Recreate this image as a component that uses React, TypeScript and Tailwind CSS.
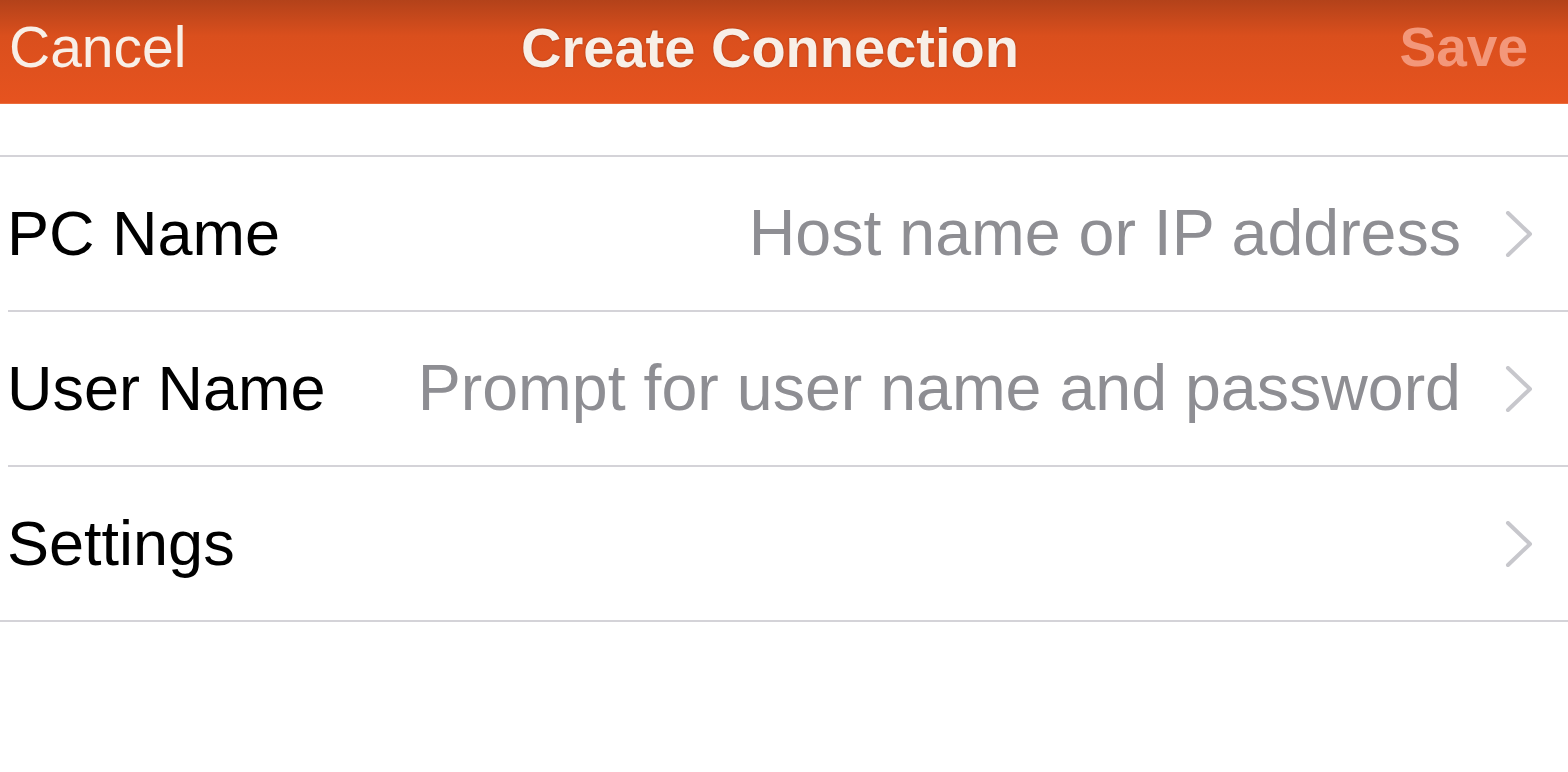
const Chevron = () => (
  <svg width="30" height="46" viewBox="0 0 30 46" className="shrink-0">
    <polyline
      points="4,2 26,23 4,44"
      fill="none"
      stroke="#c7c7cc"
      strokeWidth="4"
      strokeLinecap="round"
      strokeLinejoin="round"
    />
  </svg>
);

const Row = ({ label, value }: { label: string; value?: string }) => (
  <div className="flex h-[153px] items-center pl-[7px] pr-[34px]">
    <p className="text-[63px] text-black">{label}</p>
    <div className="flex grow items-center justify-end">
      {value && <p className="mr-[43px] text-[64.5px] text-[#8e8e93]">{value}</p>}
      <Chevron />
    </div>
  </div>
);

const App = () => {
  return (
    <div className="h-[772px] w-full overflow-hidden bg-white font-['Liberation_Sans',Arial,sans-serif]">
      <header className="grid h-[104px] grid-cols-3 items-center border-b border-[#ec6d3c] bg-linear-to-b from-[#b3421a] via-[#da4f1d] via-[35%] to-[#e6531f] pb-[8px] [text-shadow:0_0_2px_rgba(80,20,0,0.45)]">
        <button className="justify-self-start pl-[9px] text-[57px] text-[#f8efe7]">Cancel</button>
        <p className="justify-self-center pr-[28px] text-[56px] font-bold whitespace-nowrap text-[#f8efe7]">
          Create Connection
        </p>
        <button className="justify-self-end pr-[40px] text-[55px] font-bold text-[#f3977a]">Save</button>
      </header>
      <div className="h-[51px]"></div>
      <div className="h-[2px] bg-[#d4d3d8]"></div>
      <Row label="PC Name" value="Host name or IP address" />
      <div className="ml-[8px] h-[2px] bg-[#d4d3d8]"></div>
      <Row label="User Name" value="Prompt for user name and password" />
      <div className="ml-[8px] h-[2px] bg-[#d4d3d8]"></div>
      <Row label="Settings" />
      <div className="h-[2px] bg-[#d4d3d8]"></div>
    </div>
  );
};

export default App;
